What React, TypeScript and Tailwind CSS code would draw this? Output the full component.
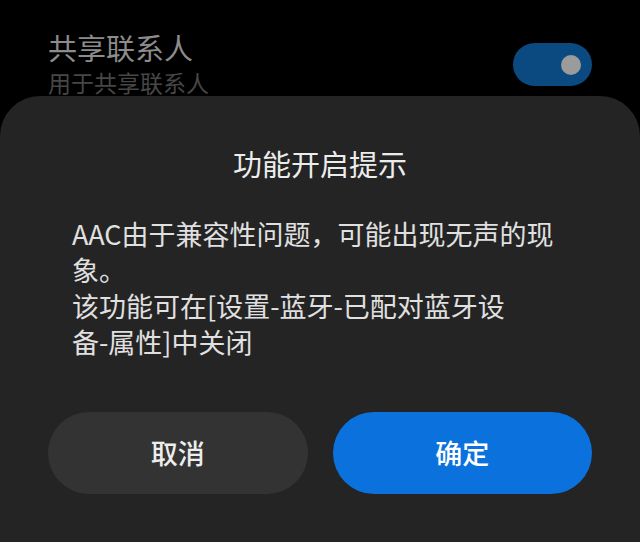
export default function App() {
  const cjk = { fontFamily: '"Noto Sans CJK SC", "Noto Sans", sans-serif' };
  return (
    <div className="flex h-[542px] w-[640px] flex-col overflow-hidden bg-black" style={cjk}>
      <div className="relative h-[96px] shrink-0 overflow-hidden">
        <div className="flex items-start justify-between pl-[48px] pr-[48px] pt-[30px]">
          <div>
            <div className="text-[29px] leading-[34px] text-[#8c8c8c]">共享联系人</div>
            <div className="mt-[4px] text-[23px] leading-[28px] text-[#474747]">用于共享联系人</div>
          </div>
          <div className="mt-[13px] flex h-[43px] w-[79px] items-center justify-end rounded-full bg-[#0a4a80] pr-[11px]">
            <div className="h-[20px] w-[20px] rounded-full bg-[#9b9b9b]" />
          </div>
        </div>
      </div>
      <div className="flex flex-1 flex-col rounded-t-[40px] bg-[#242424]">
        <div className="pt-[46px] text-center text-[29px] leading-[42px] text-[#ececec]">
          功能开启提示
        </div>
        <div className="mt-[32px] px-[72px] text-[27px] leading-[36px] text-[#e0e0e0]">
          <div>AAC由于兼容性问题，可能出现无声的现</div>
          <div>象。</div>
          <div>该功能可在[设置-蓝牙-已配对蓝牙设</div>
          <div>备-属性]中关闭</div>
        </div>
        <div className="mt-[52px] flex gap-[25px] px-[48px]">
          <button className="h-[82px] flex-1 rounded-full bg-[#333333] text-[27px] font-medium text-[#ededed]">
            取消
          </button>
          <button className="h-[82px] flex-1 rounded-full bg-[#0b72dd] text-[27px] font-medium text-white">
            确定
          </button>
        </div>
      </div>
    </div>
  );
}
